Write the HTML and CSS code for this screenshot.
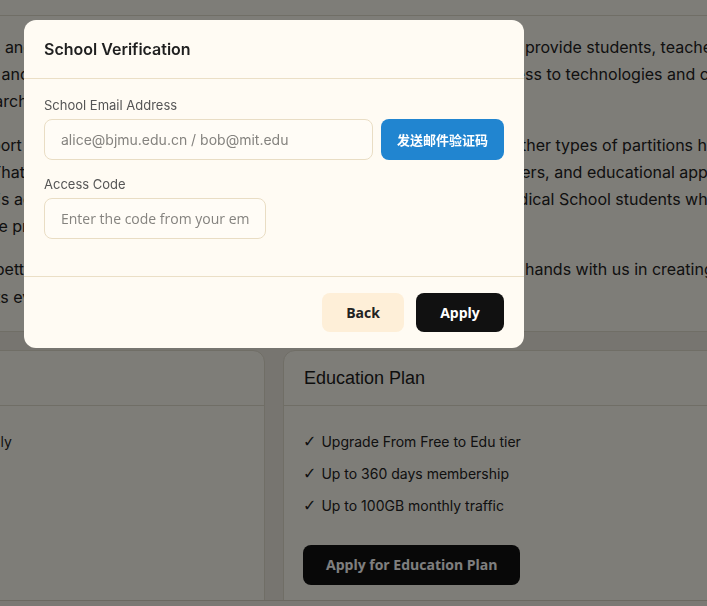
FILE: index.html
```html
<!DOCTYPE html>
<html>
<head>
    <meta charset="UTF-8">
    <title>Education Plan</title>
    <link rel="stylesheet" href="styles.css">
</head>
<body>
    <div class="page">
        <section class="intro">
            <div class="intro-head"></div>
            <div class="intro-body">
                <p>Schools and universities are where tomorrow is born, and we feel honored to provide students, teachers, researchers,<br>parents and staff from partner institutions with fair or deeply discounted access to technologies and content that powers<br>all research and learning.</p>
                <p>To support it, we have set up a new Education partition in addition to all the other types of partitions hosted in our<br>cloud. That partition is reserved for students, teachers, fellows, and researchers, and educational apps built for them.<br>Now, this access is open to faculty from partner universities and to some Medical School students who wish to<br>enter the program through the Education Plan below.</p>
                <p>To see better service, we urge all schools, teachers and students alike to join hands with us in creating a network<br>that suits everyone in academia.</p>
            </div>
        </section>

        <div class="plans">
            <div class="plan">
                <div class="plan-head">Free</div>
                <div class="plan-body">
                    <ul class="plan-list">
                        <li>Monthly</li>
                        <li>Free</li>
                        <li>1GB</li>
                    </ul>
                </div>
            </div>
            <div class="plan">
                <div class="plan-head">Education Plan</div>
                <div class="plan-body">
                    <ul class="plan-list">
                        <li>Upgrade From Free to Edu tier</li>
                        <li>Up to 360 days membership</li>
                        <li>Up to 100GB monthly traffic</li>
                    </ul>
                    <button class="plan-btn">Apply for Education Plan</button>
                </div>
            </div>
        </div>
    </div>
    <div class="bottom-bar"></div>

    <div class="dimmer">
        <div class="modal">
            <div class="modal-head">School Verification</div>
            <div class="modal-body">
                <div class="field">
                    <label class="field-label" for="email">School Email Address</label>
                    <div class="email-row">
                        <input type="text" id="email" class="field-input" placeholder="alice@bjmu.edu.cn / bob@mit.edu" />
                        <button class="send-btn">发送邮件验证码</button>
                    </div>
                </div>
                <div class="field">
                    <label class="field-label" for="code">Access Code</label>
                    <input type="text" id="code" class="field-input code-input" placeholder="Enter the code from your email" />
                </div>
            </div>
            <div class="modal-foot">
                <button class="btn btn-back">Back</button>
                <button class="btn btn-apply">Apply</button>
            </div>
        </div>
    </div>
</body>
</html>
```

FILE: styles.css
```css
body {
    margin: 0;
    height: 606px;
    overflow: hidden;
    font-family: Inter, 'Noto Sans', sans-serif;
    background-color: #efebe0;
    color: #222;
}
.page {
    margin-left: -80px;
    width: 1100px;
}
.intro {
    background-color: #fdfaf1;
    border-bottom: 1px solid #e0dccd;
}
.intro-head {
    height: 15px;
    border-bottom: 1px solid #e0dccd;
}
.intro-body {
    padding: 18px 20px 20px;
    font-size: 16px;
    line-height: 1.7;
}
.intro-body p {
    margin: 0 0 16px;
    white-space: nowrap;
}
.intro-body p:last-child {
    margin-bottom: 0;
}
.plans {
    display: grid;
    grid-template-columns: 345px 1fr;
    gap: 18px;
    margin-top: 18px;
}
.plan {
    background-color: #fdfaf1;
    border: 1px solid #e0dccd;
    border-radius: 12px;
}
.plan-head {
    height: 54px;
    line-height: 54px;
    padding: 0 20px;
    border-bottom: 1px solid #e0dccd;
    font-family: 'Liberation Sans', Arial, sans-serif;
    font-size: 18px;
    color: #1c1c1c;
}
.plan-body {
    padding: 25px 20px 40px 19px;
}
.plan-list {
    list-style: none;
    margin: 0;
    padding: 0;
    font-size: 14px;
    line-height: 22px;
}
.plan-list li {
    margin-bottom: 10px;
}
.plan-list li::before {
    content: "✓";
    font-family: 'DejaVu Sans', sans-serif;
    font-size: 16px;
    margin-right: 5px;
}
.plan-btn {
    margin-top: 18px;
    height: 40px;
    padding: 0 23px;
    border: 0;
    border-radius: 8px;
    background-color: #111;
    color: #fff;
    font-family: 'Open Sans', sans-serif;
    font-size: 14px;
    font-weight: bold;
}
.bottom-bar {
    position: fixed;
    left: 0;
    right: 0;
    bottom: 0;
    height: 5px;
    border-top: 1px solid #d8d3c3;
    background-color: #f6f2e8;
}
.dimmer {
    position: fixed;
    inset: 0;
    background-color: rgba(0, 0, 0, 0.5);
}
.modal {
    position: absolute;
    left: 24px;
    top: 20px;
    width: 500px;
    background-color: #fffbf3;
    border-radius: 12px;
    overflow: hidden;
}
.modal-head {
    height: 58px;
    line-height: 58px;
    padding: 0 20px;
    border-bottom: 1px solid #ebdfc6;
    font-size: 16px;
    font-weight: 600;
    color: #1f1f1f;
}
.modal-body {
    padding: 18px 20px 37px;
    border-bottom: 1px solid #ebdfc6;
}
.field + .field {
    margin-top: 16px;
}
.field-label {
    display: block;
    margin-bottom: 6px;
    font-size: 13px;
    line-height: 16px;
    color: #555;
}
.email-row {
    display: flex;
    gap: 8px;
}
.field-input {
    box-sizing: border-box;
    flex: 1;
    height: 41px;
    padding: 0 16px;
    border: 1px solid #e9ddc4;
    border-radius: 8px;
    background-color: #fffcf6;
    font-family: Inter, sans-serif;
    font-size: 14px;
    color: #333;
    outline: none;
}
.field-input::placeholder {
    color: #85837f;
}
.code-input {
    width: 222px;
    font-family: 'Open Sans', sans-serif;
}
.send-btn {
    width: 123px;
    height: 41px;
    border: 0;
    border-radius: 8px;
    background-color: #2185d0;
    color: #fff;
    font-family: 'Noto Sans CJK SC', sans-serif;
    font-size: 13px;
    font-weight: bold;
}
.modal-foot {
    display: flex;
    justify-content: flex-end;
    gap: 12px;
    padding: 16px 20px;
}
.btn {
    height: 39px;
    border: 0;
    border-radius: 8px;
    font-family: 'Open Sans', sans-serif;
    font-size: 14px;
    font-weight: bold;
}
.btn-back {
    width: 82px;
    background-color: #feefd8;
    color: #222;
}
.btn-apply {
    width: 88px;
    background-color: #111;
    color: #fff;
}
```
